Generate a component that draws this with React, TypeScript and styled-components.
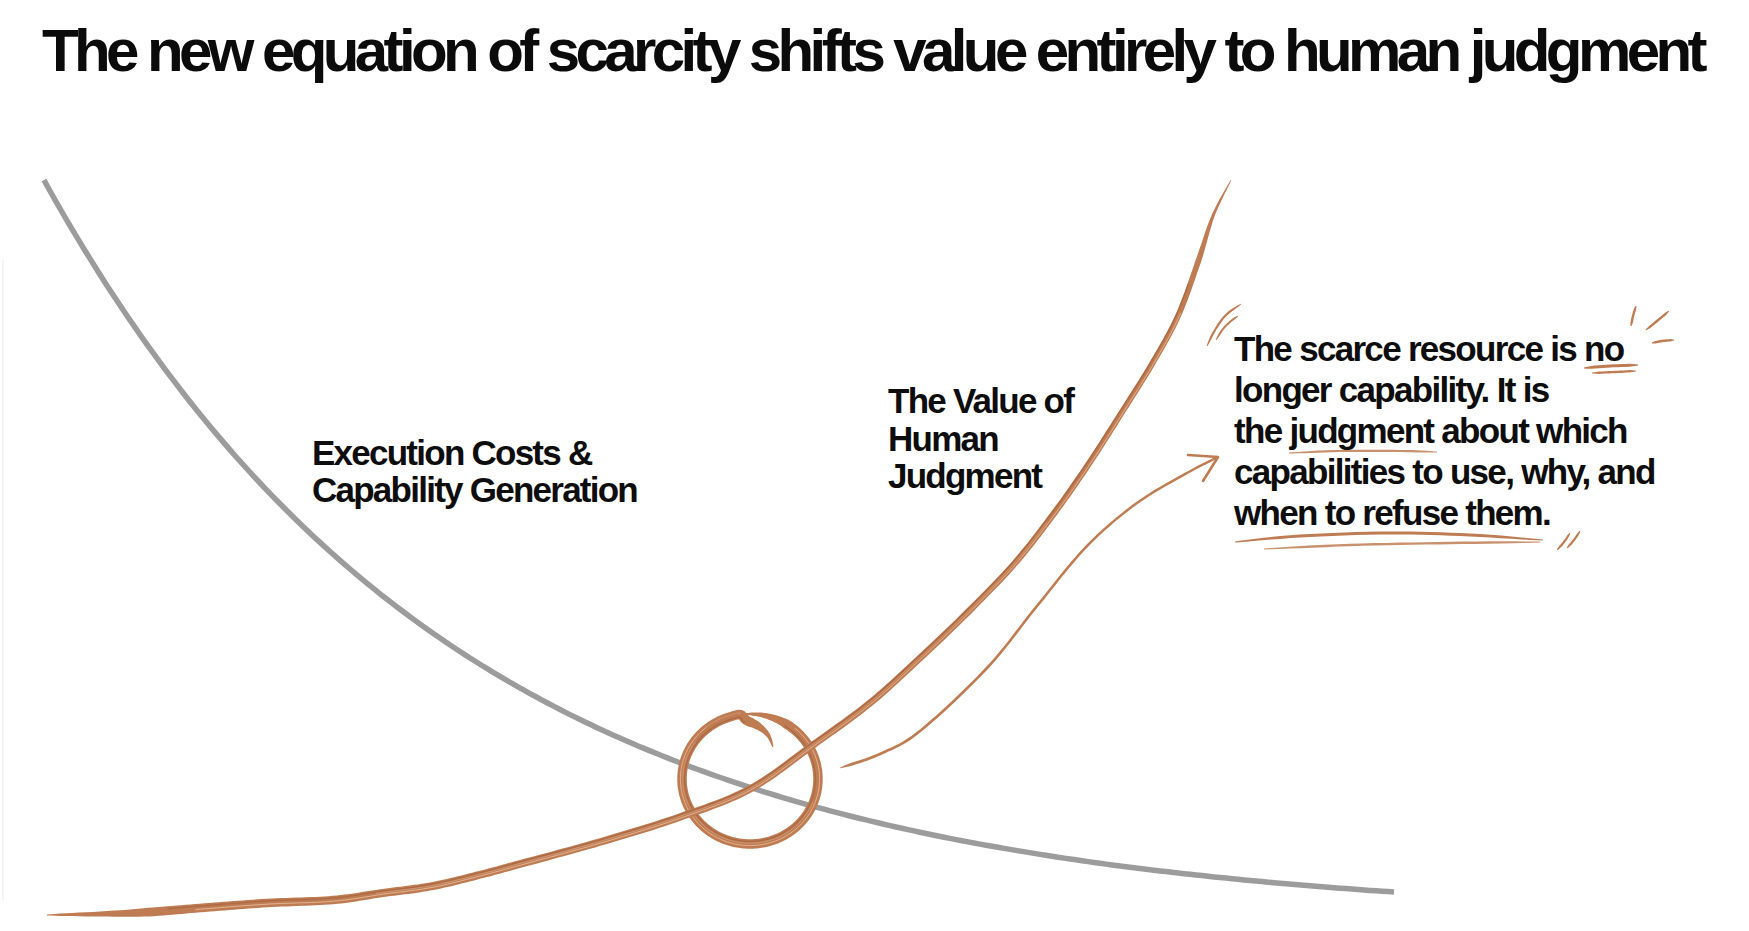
import React from 'react';
import styled, { createGlobalStyle } from 'styled-components';

type P = [number, number];

const GlobalStyle = createGlobalStyle`
  html, body {
    margin: 0;
    padding: 0;
    background: #ffffff;
  }
  body {
    font-family: "Liberation Sans", Arial, Helvetica, sans-serif;
    color: #0d0d0d;
  }
`;

const Page = styled.main`
  width: 1749px;
  height: 931px;
  overflow: hidden;
  display: flex;
  flex-direction: column;
  background: #ffffff;
`;

const Header = styled.header`
  flex: none;
  height: 81px;
  box-sizing: border-box;
  padding: 21px 0 0 42px;
`;

const Title = styled.h1`
  margin: 0;
  font-family: "Liberation Sans", Arial, Helvetica, sans-serif;
  font-weight: 700;
  font-size: 60px;
  line-height: 60px;
  letter-spacing: -4.6px;
  color: #0b0b0b;
  white-space: nowrap;
`;

const Chart = styled.section`
  position: relative;
  flex: 1;
`;

const Drawing = styled.svg`
  display: block;
  width: 1749px;
  height: 850px;
`;

const Label = styled.p<{ $x: number; $y: number; $lh: number }>`
  position: absolute;
  left: ${(p) => p.$x}px;
  top: ${(p) => p.$y}px;
  margin: 0;
  font-family: "Liberation Sans", Arial, Helvetica, sans-serif;
  font-weight: 700;
  font-size: 35px;
  line-height: ${(p) => p.$lh}px;
  letter-spacing: -1.75px;
  color: #0d0d0d;
  white-space: nowrap;
`;

const Note = styled(Label)`
  letter-spacing: -1.7px;
`;

/* ---------- drawing helpers ---------- */

function spline(points: P[], steps = 14): P[] {
  const out: P[] = [];
  for (let i = 0; i < points.length - 1; i++) {
    const p0 = points[i - 1] || points[i];
    const p1 = points[i];
    const p2 = points[i + 1];
    const p3 = points[i + 2] || p2;
    for (let s = 0; s < steps; s++) {
      const t = s / steps;
      const t2 = t * t;
      const t3 = t2 * t;
      const f = (k: 0 | 1) =>
        0.5 *
        (2 * p1[k] +
          (-p0[k] + p2[k]) * t +
          (2 * p0[k] - 5 * p1[k] + 4 * p2[k] - p3[k]) * t2 +
          (-p0[k] + 3 * p1[k] - 3 * p2[k] + p3[k]) * t3);
      out.push([f(0), f(1)]);
    }
  }
  out.push(points[points.length - 1]);
  return out;
}

function normals(pts: P[]): P[] {
  const n = pts.length;
  return pts.map((_, i) => {
    const a = pts[Math.max(0, i - 1)];
    const b = pts[Math.min(n - 1, i + 1)];
    const dx = b[0] - a[0];
    const dy = b[1] - a[1];
    const len = Math.hypot(dx, dy) || 1;
    return [-dy / len, dx / len] as P;
  });
}

function ribbon(pts: P[], w: (t: number) => number): string {
  const nm = normals(pts);
  const n = pts.length;
  const left: string[] = [];
  const right: string[] = [];
  pts.forEach((p, i) => {
    const hw = w(i / (n - 1)) / 2;
    left.push(`${(p[0] + nm[i][0] * hw).toFixed(1)},${(p[1] + nm[i][1] * hw).toFixed(1)}`);
    right.push(`${(p[0] - nm[i][0] * hw).toFixed(1)},${(p[1] - nm[i][1] * hw).toFixed(1)}`);
  });
  return `M${left.join('L')}L${right.reverse().join('L')}Z`;
}

function streak(pts: P[], off: number, from = 0, to = 1): string {
  const nm = normals(pts);
  const n = pts.length;
  const sel: string[] = [];
  pts.forEach((p, i) => {
    const t = i / (n - 1);
    if (t < from || t > to) return;
    sel.push(`${(p[0] + nm[i][0] * off).toFixed(1)},${(p[1] + nm[i][1] * off).toFixed(1)}`);
  });
  return `M${sel.join('L')}`;
}

function line(pts: P[]): string {
  return `M${pts.map((p) => `${p[0].toFixed(1)},${p[1].toFixed(1)}`).join('L')}`;
}

/* ---------- geometry (page coordinates) ---------- */

/* falling cost curve: y = 919.5 - 823 * e^(-x / 410) */
const greyPts: P[] = (() => {
  const pts: P[] = [];
  for (let x = 44; x <= 1394; x += 6) pts.push([x, 919.5 - 823 * Math.exp(-x / 410)]);
  pts.push([1394, 919.5 - 823 * Math.exp(-1394 / 410)]);
  return pts;
})();

const copperPts = spline([
  [47, 915],
  [133, 913],
  [200, 908],
  [267, 903],
  [333, 900],
  [383, 893],
  [433, 886],
  [483, 874],
  [520, 864],
  [600, 842],
  [680, 817],
  [750, 789],
  [813, 745],
  [870, 703],
  [920, 658],
  [968, 612],
  [1015, 563],
  [1055, 512],
  [1090, 462],
  [1122, 412],
  [1152, 364],
  [1178, 316],
  [1198, 262],
  [1213, 216],
  [1231, 180],
]);

const copperWidth = (t: number) => {
  if (t < 0.05) return 0.8 + (t / 0.05) * 8;
  if (t > 0.92) return 0.6 + ((1 - t) / 0.08) * 5;
  return 8.8 - ((t - 0.05) / 0.87) * 3.2;
};

const circlePts: P[] = (() => {
  const cx = 750;
  const cy = 779;
  const rx = 68;
  const ry = 65;
  const pts: P[] = [
    [773, 747],
    [768, 735],
    [758, 726],
    [746, 720],
  ];
  for (let d = -98; d >= -462; d -= 8) {
    const a = (d * Math.PI) / 180;
    pts.push([cx + rx * Math.cos(a), cy + ry * Math.sin(a)]);
  }
  return spline(pts, 6);
})();

const circleWidth = (t: number) => {
  if (t < 0.05) return 1 + (t / 0.05) * 8;
  if (t > 0.9) return 1 + ((1 - t) / 0.1) * 8;
  return 9.5;
};

const arrowPts = spline([
  [840, 768],
  [880, 754],
  [920, 731],
  [987, 668],
  [1037, 606],
  [1087, 546],
  [1137, 503],
  [1187, 473],
  [1216, 458],
]);

const arrowWidth = (t: number) => (t < 0.04 ? 0.6 + (t / 0.04) * 2.2 : 2.8 - t * 0.4);

type Mark = { pts: P[]; w: number; o?: number };

const marks: Mark[] = [
  /* under "no" */
  { pts: [[1584, 368], [1610, 366], [1638, 365]], w: 3 },
  { pts: [[1592, 373], [1615, 372], [1636, 371]], w: 2.4 },
  /* under "judgment" */
  { pts: [[1289, 453], [1340, 451], [1400, 451], [1437, 452]], w: 2.2, o: 0.85 },
  /* long underline */
  { pts: [[1235, 542], [1300, 536], [1390, 533], [1470, 535], [1543, 540]], w: 3 },
  { pts: [[1264, 549], [1350, 545], [1450, 543], [1540, 542]], w: 2.4, o: 0.85 },
  /* double slash bottom */
  { pts: [[1557, 550], [1564, 542], [1570, 533]], w: 2.2 },
  { pts: [[1567, 548], [1574, 540], [1580, 531]], w: 2.2 },
  /* burst top right */
  { pts: [[1636, 306], [1633, 316], [1631, 326]], w: 2.4 },
  { pts: [[1669, 311], [1657, 321], [1646, 330]], w: 2.4 },
  { pts: [[1652, 343], [1662, 341], [1674, 340]], w: 2.4 },
  /* quote marks top left */
  { pts: [[1207, 346], [1215, 330], [1226, 315], [1241, 304]], w: 2.2 },
  { pts: [[1216, 340], [1223, 329], [1231, 321], [1238, 316]], w: 2 },
];

const markWidth = (base: number) => (t: number) =>
  base * Math.min(1, 0.35 + Math.sin(Math.PI * t) * 1.1);

const COPPER = '#bf7c53';
const COPPER_DARK = '#9a5834';
const COPPER_LIGHT = '#ebc2a2';

function CopperStroke({
  pts,
  w,
  spread = 2,
}: {
  pts: P[];
  w: (t: number) => number;
  spread?: number;
}) {
  return (
    <g>
      <path d={ribbon(pts, w)} fill={COPPER} />
      <path d={streak(pts, -spread, 0.06, 0.9)} stroke={COPPER_DARK} strokeWidth={1.3} fill="none" opacity={0.5} />
      <path d={streak(pts, spread * 0.6, 0.08, 0.88)} stroke={COPPER_LIGHT} strokeWidth={1} fill="none" opacity={0.8} />
      <path d={streak(pts, -spread * 0.3, 0.2, 0.7)} stroke={COPPER_LIGHT} strokeWidth={0.7} fill="none" opacity={0.5} />
    </g>
  );
}

export default function App() {
  return (
    <>
      <GlobalStyle />
      <Page>
        <Header>
          <Title>The new equation of scarcity shifts value entirely to human judgment</Title>
        </Header>
        <Chart>
          <Drawing viewBox="0 81 1749 850" aria-hidden="true">
            <line x1="3" y1="260" x2="3" y2="900" stroke="#f4f4f4" strokeWidth="2" />
            <path d={line(greyPts)} stroke="#9c9c9c" strokeWidth={5.5} fill="none" />
            <CopperStroke pts={circlePts} w={circleWidth} spread={2.6} />
            <path d="M706 728 Q720 716 742 712" stroke={COPPER} strokeWidth={1.4} fill="none" opacity={0.6} />
            <CopperStroke pts={copperPts} w={copperWidth} />
            <path d={ribbon(arrowPts, arrowWidth)} fill={COPPER} />
            <path
              d="M1188 455 L1218 457 L1203 481"
              stroke={COPPER}
              strokeWidth={2.6}
              fill="none"
              strokeLinecap="round"
              strokeLinejoin="round"
            />
            {marks.map((m, i) => (
              <path key={i} d={ribbon(spline(m.pts, 8), markWidth(m.w))} fill={COPPER} opacity={m.o ?? 1} />
            ))}
          </Drawing>

          <Label $x={312} $y={353} $lh={37}>
            Execution Costs &amp;
            <br />
            Capability Generation
          </Label>

          <Label $x={888} $y={301} $lh={37.5}>
            The Value of
            <br />
            Human
            <br />
            Judgment
          </Label>

          <Note $x={1234} $y={247} $lh={41}>
            The scarce resource is no
            <br />
            longer capability. It is
            <br />
            the judgment about which
            <br />
            capabilities to use, why, and
            <br />
            when to refuse them.
          </Note>
        </Chart>
      </Page>
    </>
  );
}
